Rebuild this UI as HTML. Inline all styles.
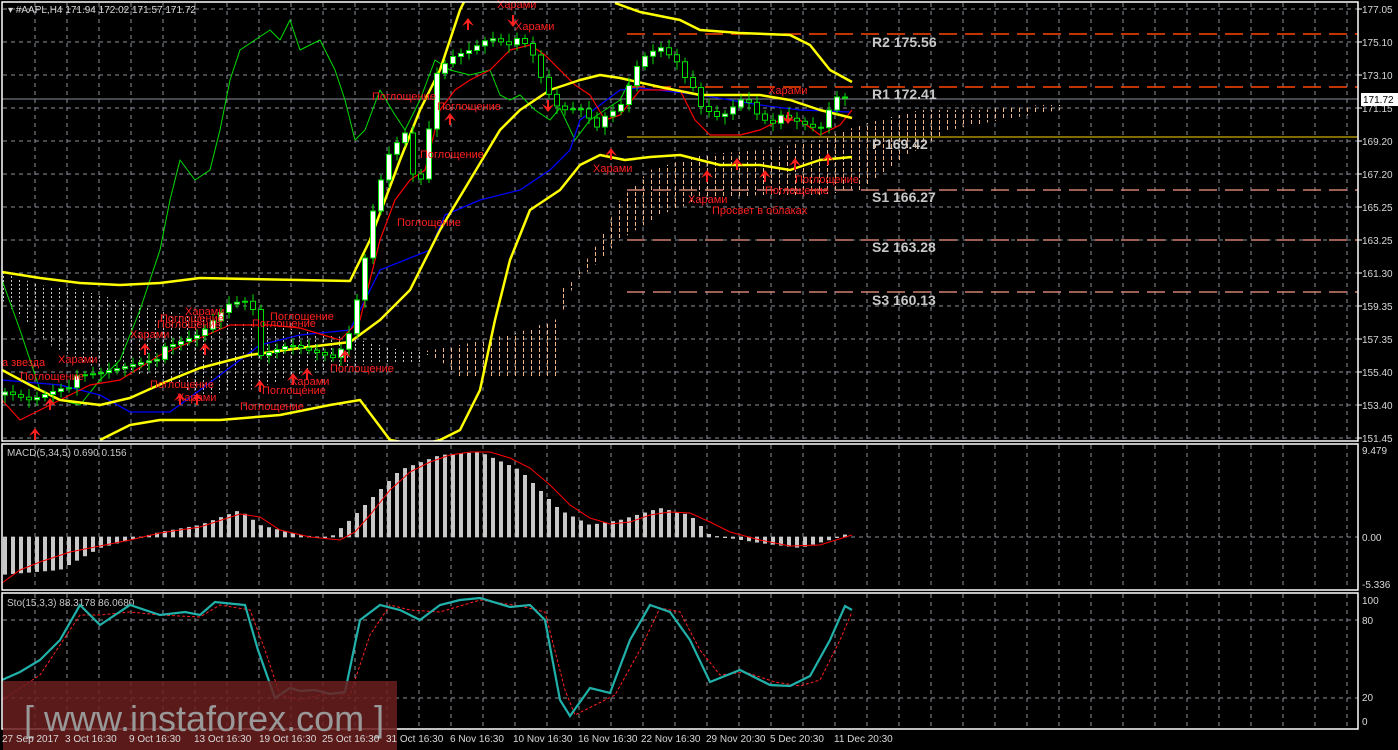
<!DOCTYPE html>
<html><head><meta charset="utf-8"><style>
html,body{margin:0;padding:0;background:#000;width:1398px;height:750px;overflow:hidden}
svg{display:block}
text{font-family:"Liberation Sans",sans-serif}
</style></head><body>
<svg id="s" width="1398" height="750" xmlns="http://www.w3.org/2000/svg">
<defs>
<clipPath id="cm"><rect x="2" y="2" width="1356" height="439"/></clipPath>
<clipPath id="cd"><rect x="2" y="444" width="1356" height="146"/></clipPath>
<clipPath id="cs"><rect x="2" y="593" width="1356" height="136"/></clipPath>
<pattern id="hw" width="8" height="4" patternUnits="userSpaceOnUse"><rect x="3" y="0" width="1" height="2" fill="#ddd"/></pattern>
<pattern id="ht" width="8" height="6" patternUnits="userSpaceOnUse"><rect x="3" y="0" width="1" height="4" fill="#f0b888"/></pattern>
</defs>
<rect width="1398" height="750" fill="#000"/>
<g id="grid" stroke="#8a8f99" stroke-dasharray="4,4" stroke-width="1"></g>
<g clip-path="url(#cm)">
<polygon points="2,272 40,285 80,290 120,300 160,310 220,320 300,330 360,340 400,350 420,352 420,362 360,365 300,375 250,390 200,395 150,375 100,370 50,345 2,300" fill="url(#hw)" opacity="0.9"/>
<polygon points="420,352 460,345 520,332 560,318 580,270 600,240 620,200 650,170 700,155 760,150 820,140 860,125 920,110 980,110 1040,105 1060,105 1060,110 1000,120 950,130 900,160 860,190 820,195 760,195 700,200 660,215 620,240 590,270 560,290 560,378 500,378 460,378 440,360" fill="url(#ht)"/>
</g>
<g stroke-width="1.5">
<line x1="627" y1="34" x2="1358" y2="34" stroke="#ff4500" stroke-dasharray="18,8"/>
<line x1="627" y1="87" x2="1358" y2="87" stroke="#ff4500" stroke-dasharray="18,8"/>
<line x1="627" y1="137" x2="1358" y2="137" stroke="#ffd700" stroke-width="1"/>
<line x1="627" y1="190" x2="1358" y2="190" stroke="#d08070" stroke-dasharray="18,8"/>
<line x1="627" y1="240" x2="1358" y2="240" stroke="#d08070" stroke-dasharray="18,8"/>
<line x1="627" y1="292" x2="1358" y2="292" stroke="#d08070" stroke-dasharray="18,8"/>
<line x1="2" y1="99" x2="1358" y2="99" stroke="#8a8f99" stroke-width="1"/>
</g>
<g fill="#c8c8c8" font-family="Liberation Mono,monospace" font-weight="bold" font-size="14">
<text x="872" y="47">R2 175.56</text>
<text x="872" y="99">R1 172.41</text>
<text x="872" y="149">P 169.42</text>
<text x="872" y="202">S1 166.27</text>
<text x="872" y="252">S2 163.28</text>
<text x="872" y="305">S3 160.13</text>
</g>
<g clip-path="url(#cm)" fill="none" stroke-linejoin="round">
<polyline stroke="#00dd00" stroke-width="1" points="2,280 20,330 40,390 60,400 80,405 100,380 120,360 140,310 150,280 160,250 170,200 180,160 195,180 210,170 220,130 230,80 240,50 255,40 270,30 280,40 290,20 300,50 320,40 335,70 345,100 355,140 365,130 380,90 395,115 405,130 420,100 435,60 450,70 470,75 490,70 500,95 510,100 520,95 535,110 550,120 560,108 575,140 590,120 605,110 620,100 630,80 640,85"/>
<polyline stroke="#0000ff" stroke-width="1.3" points="2,380 60,385 100,395 130,412 170,412 200,390 260,345 300,335 350,330 365,300 380,270 430,250 445,215 480,200 520,190 550,170 570,150 580,120 620,90 640,88 700,95 760,105 800,110 850,112"/>
<polyline stroke="#ff0000" stroke-width="1.2" points="2,400 20,420 40,410 60,400 90,385 120,380 160,355 200,338 230,325 270,325 300,328 340,340 360,320 380,240 395,200 410,180 425,170 440,110 455,90 470,80 490,70 510,50 530,45 545,55 560,70 575,85 590,95 605,120 620,115 640,90 680,90 695,120 710,135 740,135 760,130 780,120 800,120 820,135 840,125 852,110"/>
<polyline stroke="#ffff00" stroke-width="2.5" points="2,272 40,278 80,283 120,285 160,283 200,278 250,279 300,280 350,281 370,240 400,160 420,110 440,70 460,10 470,-10"/>
<polyline stroke="#ffff00" stroke-width="2.5" points="615,3 640,12 680,20 700,30 740,33 790,35 810,45 830,70 852,82"/>
<polyline stroke="#ffff00" stroke-width="2.5" points="2,370 30,385 60,400 100,405 130,398 170,380 200,368 250,355 300,348 350,342 380,320 410,290 440,230 470,180 500,130 520,110 550,90 580,80 600,75 620,78 660,87 700,95 720,95 760,95 790,100 820,110 852,118"/>
<polyline stroke="#ffff00" stroke-width="2.5" points="100,440 130,425 160,420 220,420 280,415 330,405 360,400 375,420 390,440 420,445 440,440 460,430 480,390 495,320 510,260 530,210 560,190 580,165 600,155 625,160 650,157 680,155 700,160 720,165 760,165 790,170 820,160 852,157"/>
</g>
<g id="candles" clip-path="url(#cm)"></g>
<g fill="#ff2020" font-size="11">
<text x="2" y="366">а звезда</text><text x="20" y="380">Поглощение</text><text x="58" y="363">Харами</text>
<text x="130" y="338">Харами</text><text x="157" y="328">Поглощение</text><text x="185" y="315">Харами</text>
<text x="160" y="322">Поглощение</text><text x="252" y="327">Поглощение</text><text x="270" y="320">Поглощение</text>
<text x="150" y="388">Поглощение</text><text x="177" y="401">Харами</text><text x="240" y="410">Поглощение</text>
<text x="290" y="385">Харами</text><text x="262" y="394">Поглощение</text><text x="330" y="372">Поглощение</text>
<text x="372" y="100">Поглощение</text><text x="437" y="110">Поглощение</text><text x="420" y="158">Поглощение</text>
<text x="397" y="226">Поглощение</text><text x="497" y="8">Харами</text><text x="515" y="30">Харами</text>
<text x="593" y="172">Харами</text><text x="688" y="203">Харами</text><text x="712" y="214">Просвет в облаках</text>
<text x="768" y="94">Харами</text><text x="795" y="183">Поглощение</text><text x="765" y="194">Поглощение</text>
</g>
<g id="arrows" fill="#ff2020"></g>
<g id="macd" clip-path="url(#cd)"></g>
<polyline clip-path="url(#cd)" fill="none" stroke="#ff0000" stroke-width="1" points="2,583 20,570 40,562 70,552 100,546 130,540 160,533 200,527 240,514 260,517 280,530 310,537 340,540 355,532 370,515 390,490 410,472 430,462 450,455 470,452 490,452 510,458 530,468 550,485 570,505 590,518 610,524 630,522 650,515 670,512 690,513 710,522 730,532 760,540 790,546 820,545 852,535"/>
<g fill="#c8c8c8" font-size="10"><text x="7" y="456">MACD(5,34,5) 0.690 0.156</text><text x="7" y="606">Sto(15,3,3) 88.3178 86.0680</text></g>
<g clip-path="url(#cs)" fill="none">
<polyline stroke="#ff2020" stroke-width="1" stroke-dasharray="3,2" points="2,700 40,675 80,615 100,615 130,612 160,615 200,617 220,605 250,610 265,650 280,695 300,700 330,693 350,695 370,635 390,605 410,610 440,612 480,600 520,606 545,612 565,690 575,715 595,705 615,695 640,650 660,608 680,612 700,650 720,675 745,672 775,682 800,686 820,680 840,640 852,612"/>
<polyline stroke="#20b2aa" stroke-width="2.2" points="2,680 20,672 40,660 60,640 80,605 95,620 100,625 115,615 130,605 160,615 185,612 200,615 215,602 245,605 258,650 275,698 290,688 300,691 315,690 330,694 345,692 360,620 380,605 400,610 420,620 440,605 460,600 480,598 510,607 530,605 545,620 560,700 570,716 590,688 610,693 630,640 650,605 670,612 690,640 710,682 740,670 770,685 790,686 810,676 830,640 845,606 852,610"/>
</g>
<g fill="none" stroke="#fff" stroke-width="1.5">
<rect x="2" y="2" width="1356" height="439"/>
<rect x="2" y="444" width="1356" height="146"/>
<rect x="2" y="593" width="1356" height="136"/>
</g>
<g id="ylab" fill="#d8d8d8" font-size="10"></g>
<rect x="1361" y="93" width="37" height="13" fill="#fff"/><text x="1363" y="103" font-size="10" fill="#000">171.72</text>
<g fill="#d8d8d8" font-size="10">
<text x="1362" y="454">9.479</text><text x="1362" y="541">0.00</text><text x="1362" y="588">-5.336</text>
<text x="1362" y="604">100</text><text x="1362" y="624">80</text><text x="1362" y="701">20</text><text x="1362" y="725">0</text>
</g>
<text x="8" y="13" fill="#d8d8d8" font-size="10">▾ #AAPL,H4  171.94 172.02 171.57 171.72</text>
<rect x="3" y="681" width="394" height="69" fill="#6b1e1e" opacity="0.85"/>
<text x="24" y="731" fill="#999" font-size="36">[ www.instaforex.com ]</text>
<g fill="#d8d8d8" font-size="10">
<text x="2" y="742">27 Sep 2017</text><text x="65" y="742">3 Oct 16:30</text><text x="129" y="742">9 Oct 16:30</text><text x="194" y="742">13 Oct 16:30</text><text x="259" y="742">19 Oct 16:30</text><text x="322" y="742">25 Oct 16:30</text><text x="386" y="742">31 Oct 16:30</text><text x="450" y="742">6 Nov 16:30</text><text x="513" y="742">10 Nov 16:30</text><text x="578" y="742">16 Nov 16:30</text><text x="641" y="742">22 Nov 16:30</text><text x="706" y="742">29 Nov 20:30</text><text x="770" y="742">5 Dec 20:30</text><text x="834" y="742">11 Dec 20:30</text>
</g>
</svg>
<script>
(function(){
var NS="http://www.w3.org/2000/svg";
function el(p,t,a){var e=document.createElementNS(NS,t);for(var k in a)e.setAttribute(k,a[k]);p.appendChild(e);return e;}
var g=document.getElementById('grid');
for(var x=35;x<1358;x+=32){el(g,'line',{x1:x,y1:3,x2:x,y2:441});el(g,'line',{x1:x,y1:445,x2:x,y2:590});el(g,'line',{x1:x,y1:594,x2:x,y2:729});}
var labs=["177.05","175.10","173.10","171.15","169.20","167.20","165.25","163.25","161.30","159.35","157.35","155.40","153.40","151.45"];
var yl=document.getElementById('ylab');
for(var i=0;i<14;i++){var y=9+i*33;el(g,'line',{x1:3,y1:y,x2:1358,y2:y});var t=el(yl,'text',{x:1362,y:y+4});t.textContent=labs[i];el(yl,'line',{x1:1358,y1:y,x2:1362,y2:y,stroke:'#fff'});}
el(g,'line',{x1:3,y1:537,x2:1358,y2:537});el(g,'line',{x1:3,y1:620,x2:1358,y2:620});el(g,'line',{x1:3,y1:698,x2:1358,y2:698});
function interp(pts,x){for(var i=0;i<pts.length-1;i++){if(x>=pts[i][0]&&x<=pts[i+1][0]){var f=(x-pts[i][0])/(pts[i+1][0]-pts[i][0]);return pts[i][1]+f*(pts[i+1][1]-pts[i][1]);}}return pts[pts.length-1][1];}
var mp=[[0,575],[60,570],[100,548],[130,540],[160,532],[200,525],[240,510],[260,525],[300,535],[330,538],[350,520],[380,490],[400,470],[440,455],[480,452],[520,470],[560,510],[590,525],[620,520],[660,508],[690,515],[710,535],[760,543],[800,548],[830,540],[852,532]];
var m=document.getElementById('macd');
for(var x=5;x<=852;x+=8){var y=interp(mp,x);var a=Math.min(y,537),b=Math.max(y,537);el(m,'rect',{x:x-2,y:a,width:4,height:Math.max(1,b-a),fill:'#c8c8c8'});}
var pp=[[5,395],[30,400],[60,385],[100,375],[140,360],[170,350],[200,335],[230,300],[250,295],[260,360],[290,345],[320,350],[345,355],[360,290],[375,200],[390,150],[405,130],[415,180],[425,170],[435,80],[450,60],[470,50],[490,35],[510,40],[530,50],[545,90],[560,110],[580,105],[600,125],[620,110],[640,60],[660,45],[680,60],[700,110],[720,120],[745,95],[760,115],[780,120],[800,125],[820,130],[835,95],[850,95]];
var c=document.getElementById('candles');var prev=interp(pp,5);
for(var x=5;x<=850;x+=8){var cl=interp(pp,x)+((x*7)%11-5);var o=prev;var hi=Math.min(o,cl)-4-(x%5),lo=Math.max(o,cl)+4+(x%3)*2;
el(c,'line',{x1:x,y1:hi,x2:x,y2:lo,stroke:'#00dd00'});
var bull=cl<o;el(c,'rect',{x:x-2.5,y:Math.min(o,cl),width:5,height:Math.max(1,Math.abs(o-cl)),fill:bull?'#fff':'#000',stroke:'#00dd00','stroke-width':1});prev=cl;}
var ar=document.getElementById('arrows');
[[35,440,1],[50,410,1],[145,355,1],[180,405,1],[197,405,1],[205,355,1],[260,392,1],[293,385,1],[307,380,1],[345,362,1],[450,125,1],[468,30,1],[513,15,0],[611,160,1],[707,182,1],[737,170,1],[765,182,1],[795,170,1],[828,165,1],[788,112,0],[548,100,0]].forEach(function(a){var x=a[0],y=a[1];
if(a[2])el(ar,'polygon',{points:(x-6)+','+(y-4)+' '+x+','+(y-12)+' '+(x+6)+','+(y-4)+' '+(x+1)+','+(y-7)+' '+(x+1)+','+y+' '+(x-1)+','+y+' '+(x-1)+','+(y-7)});
else el(ar,'polygon',{points:(x-6)+','+(y+4)+' '+x+','+(y+12)+' '+(x+6)+','+(y+4)+' '+(x+1)+','+(y+7)+' '+(x+1)+','+y+' '+(x-1)+','+y+' '+(x-1)+','+(y+7)});});
})();
</script>
</body></html>
